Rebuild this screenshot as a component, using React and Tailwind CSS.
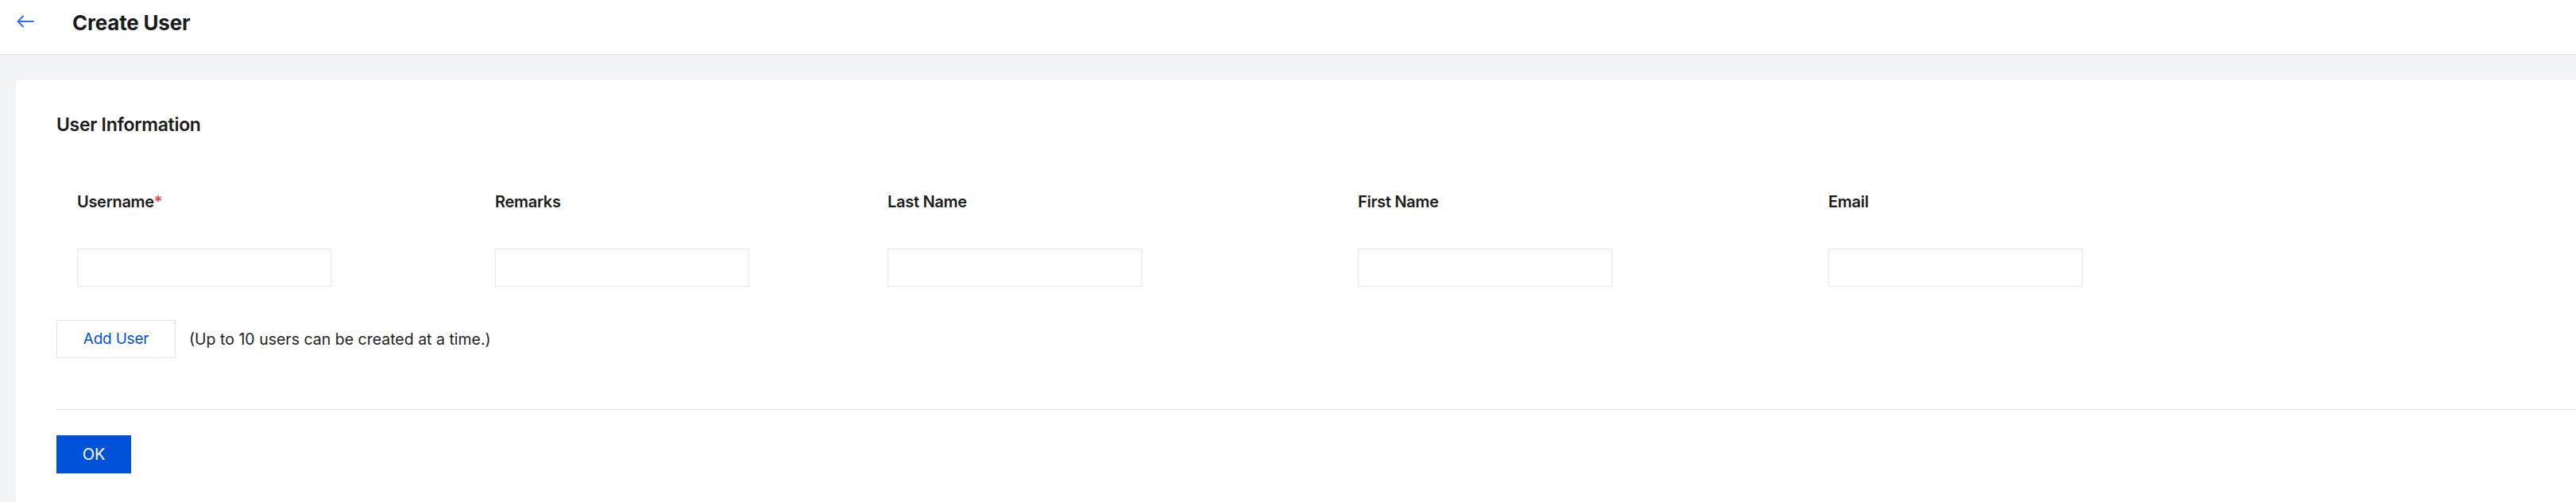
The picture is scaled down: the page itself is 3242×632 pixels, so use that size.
import React from "react";

const fields = [
  { label: "Username", required: true },
  { label: "Remarks" },
  { label: "Last Name" },
  { label: "First Name" },
  { label: "Email" },
];

function BackArrow() {
  return (
    <svg width="22" height="16" viewBox="0 0 22 16" fill="none" stroke="#2f6ff0" strokeWidth="2" strokeLinecap="round" strokeLinejoin="round">
      <path d="M21 8H2" />
      <path d="M8 1.5L1.5 8L8 14.5" />
    </svg>
  );
}

export default function App() {
  return (
    <div className="min-h-[632px] bg-[#f3f4f8] font-['Inter',sans-serif] text-[#1b1b1b]">
      <header className="h-[69px] bg-white border-b border-[#e4e6ec] flex items-start">
        <button className="ml-[21px] mt-[19px] w-[22px] h-[16px] flex items-center">
          <BackArrow />
        </button>
        <h1 className="ml-[48px] mt-[11px] text-[26px] leading-[36px] font-bold tracking-[-0.2px]">Create User</h1>
      </header>

      <main className="pt-[32px] pl-[20px]">
        <section className="bg-white min-h-[531px] pl-[51px] pt-[40px]">
          <h2 className="text-[23px] leading-[32px] font-semibold tracking-[-0.3px]">User Information</h2>

          <div className="mt-[67px] grid grid-cols-[526px_494px_592px_592px_1fr]">
            {fields.map((f) => (
              <div key={f.label} className="pl-[26px] flex flex-col">
                <div className="text-[20px] leading-[28px] font-semibold tracking-[-0.3px]">
                  {f.label}
                  {f.required && <span className="text-[#e54545]">*</span>}
                </div>
                <input
                  type="text"
                  className="mt-[45px] w-[320px] h-[48px] border border-[#e5e6ee] bg-white outline-none"
                />
              </div>
            ))}
          </div>

          <div className="mt-[42px] flex items-center">
            <button className="w-[150px] h-[48px] border border-[#e3e5ec] bg-white text-[#0052d9] text-[19px] leading-[28px] tracking-[-0.2px]">
              Add User
            </button>
            <span className="ml-[17px] text-[19.5px] leading-[28px] text-[#222]">
              (Up to 10 users can be created at a time.)
            </span>
          </div>

          <div className="mt-[64px] h-px bg-[#dddddd]" />

          <div className="pt-[32px] pb-[36px]">
            <button className="w-[94px] h-[48px] bg-[#0052d9] text-white text-[20px] leading-[28px]">OK</button>
          </div>
        </section>
      </main>
    </div>
  );
}
